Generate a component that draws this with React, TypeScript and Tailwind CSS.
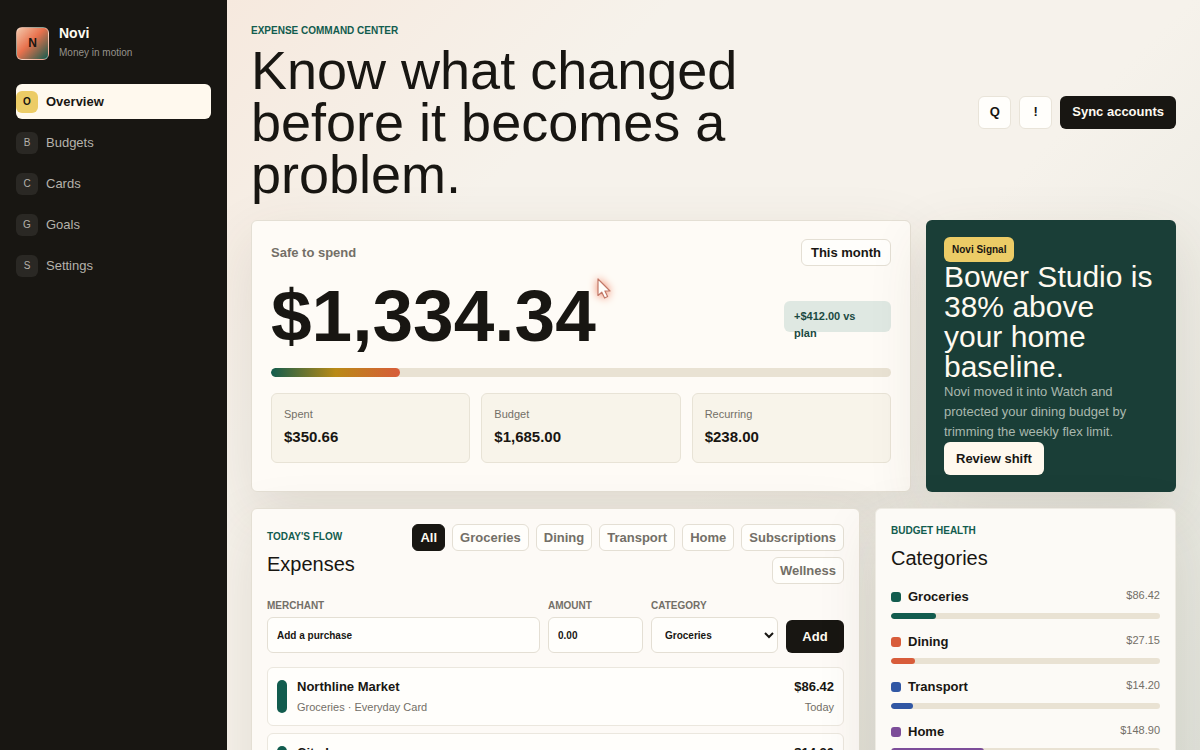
import { useState } from 'react';

type NavItemType = {
  letter: string;
  label: string;
}

type ExpenseType = {
  merchant: string;
  detail: string;
  amount: string;
  day: string;
  color: string;
}

type CategoryType = {
  name: string;
  amount: string;
  percent: number;
  color: string;
}

const navItems: NavItemType[] = [
  { letter: 'O', label: 'Overview' },
  { letter: 'B', label: 'Budgets' },
  { letter: 'C', label: 'Cards' },
  { letter: 'G', label: 'Goals' },
  { letter: 'S', label: 'Settings' },
];

const stats = [
  { label: 'Spent', value: '$350.66' },
  { label: 'Budget', value: '$1,685.00' },
  { label: 'Recurring', value: '$238.00' },
];

const filters = ['All', 'Groceries', 'Dining', 'Transport', 'Home', 'Subscriptions', 'Wellness'];

const expenses: ExpenseType[] = [
  { merchant: 'Northline Market', detail: 'Groceries · Everyday Card', amount: '$86.42', day: 'Today', color: 'bg-[#125c4e]' },
  { merchant: 'City Loop', detail: 'Transport · Everyday Card', amount: '$14.20', day: 'Today', color: 'bg-[#125c4e]' },
];

const categories: CategoryType[] = [
  { name: 'Groceries', amount: '$86.42', percent: 16.6, color: 'bg-[#125c4e]' },
  { name: 'Dining', amount: '$27.15', percent: 9, color: 'bg-[#d85c3a]' },
  { name: 'Transport', amount: '$14.20', percent: 8, color: 'bg-[#3157a4]' },
  { name: 'Home', amount: '$148.90', percent: 34.7, color: 'bg-[#7c4d99]' },
];

const Sidebar = () => {
  const [active, setActive] = useState('Overview');

  return (
    <aside className="flex w-[227px] shrink-0 flex-col gap-[23px] bg-[#181612] px-4 py-[25px]">
      <div className="flex items-center gap-[10px]">
        <div className="flex size-[33px] items-center justify-center rounded-md border border-white/40 bg-[linear-gradient(135deg,#f3c8ab_0%,#e8714d_45%,#125c4e_100%)] text-xs font-bold text-[#181612]">
          N
        </div>
        <div className="flex flex-col gap-1">
          <strong className="text-sm leading-4 text-[#fffaf0]">Novi</strong>
          <span className="text-[10px] leading-4 text-[#96938c]">Money in motion</span>
        </div>
      </div>
      <nav className="flex flex-col gap-[6px]">
        {navItems.map(({ letter, label }) => (
          <button
            key={label}
            type="button"
            onClick={() => setActive(label)}
            className={`flex h-[35px] items-center gap-2 rounded-md text-left text-[13px] ${active === label ? 'bg-[#fff9ee] font-bold text-[#181612]' : 'text-[#b5b2ab]'}`}
          >
            <span
              className={`flex size-[22px] items-center justify-center rounded-md text-[10px] ${active === label ? 'bg-[#eccc66]' : 'bg-[#2a2824]'}`}
            >
              {letter}
            </span>
            {label}
          </button>
        ))}
      </nav>
    </aside>
  )
}

const Eyebrow = ({ text }: { text: string }) => (
  <p className="text-[10px] leading-[14px] font-bold text-[#125c4e] uppercase">{text}</p>
)

const Header = () => (
  <header className="flex items-center justify-between gap-6 pb-1">
    <div className="flex max-w-[560px] flex-col gap-[6px]">
      <Eyebrow text="Expense command center" />
      <h1 className="text-[54px] leading-[52px]">Know what changed before it becomes a problem.</h1>
    </div>
    <div className="flex shrink-0 gap-2 text-[13px] font-bold">
      <button type="button" aria-label="Search" className="size-[33px] rounded-md border border-[#e9e4d9] bg-[#fffefb]">Q</button>
      <button type="button" aria-label="Alerts" className="size-[33px] rounded-md border border-[#e9e4d9] bg-[#fffefb]">!</button>
      <button type="button" className="h-[33px] rounded-md bg-[#181612] px-3 text-[#fffaf0]">Sync accounts</button>
    </div>
  </header>
)

const Pointer = () => (
  <svg
    viewBox="0 0 16 22"
    className="pointer-events-none absolute top-0 left-full h-[22px] w-4 drop-shadow-[0_0_4px_#f08060]"
    aria-hidden="true"
  >
    <path d="M2 2v16.500l3.800-3.300 2.800 5.800 3-1.500-2.700-5.500H14z" fill="#fffefb" stroke="#c07868" strokeWidth="1.200" strokeLinejoin="round" />
  </svg>
)

const BalanceCard = () => (
  <section className="rounded-md border border-[#e4dfd4] bg-[#fefbf6] px-[19px] py-[18px] shadow-[0_20px_60px_rgba(72,58,32,0.12)]">
    <div className="flex items-center justify-between">
      <h2 className="text-[13px] font-bold text-[#736f67]">Safe to spend</h2>
      <button type="button" className="h-[27px] rounded-md border border-[#e4dfd4] bg-[#fffefb] px-[9px] text-[13px] font-bold">This month</button>
    </div>
    <div className="mt-[11px] flex items-center justify-between">
      <div className="relative">
        <strong className="block text-[73px] leading-[78px]">$1,334.34</strong>
        <Pointer />
      </div>
      <div className="h-[31px] w-[107px] rounded-md bg-[#dfe8e2] px-[10px] py-[7px] text-[11px] leading-[17px] font-bold text-[#1b4a42]">
        +$412.00 vs plan
      </div>
    </div>
    <div className="mt-[13px] h-[9px] overflow-hidden rounded-full bg-[#e9e2d3]">
      <div
        className="h-full rounded-full bg-[linear-gradient(90deg,#125c4e_0%,#b98a16_50%,#d85c3a_100%)]"
        style={{ width: '20.8%' }}
      />
    </div>
    <dl className="mt-4 grid grid-cols-3 gap-[11px]">
      {stats.map(({ label, value }) => (
        <div key={label} className="h-[70px] rounded-md border border-[#e8e3d6] bg-[#f8f4ea] px-3 py-3">
          <dt className="text-[11px] leading-4 text-[#736f67]">{label}</dt>
          <dd className="mt-[5px] text-[15px] leading-5 font-bold">{value}</dd>
        </div>
      ))}
    </dl>
  </section>
)

const SignalCard = () => (
  <section className="flex flex-col items-start rounded-md bg-[#1a3e37] px-[18px] py-[17px] text-[#fffaf0] shadow-[0_20px_60px_rgba(72,58,32,0.12)]">
    <span className="rounded-md bg-[#eccc66] px-2 text-[10px] leading-[25px] font-bold text-[#181612]">Novi Signal</span>
    <h2 className="text-[30px] leading-[30px]">Bower Studio is 38% above your home baseline.</h2>
    <p className="text-[13px] leading-5 text-[#a9b8ae]">
      Novi moved it into Watch and protected your dining budget by trimming the weekly flex limit.
    </p>
    <button type="button" className="h-[33px] rounded-md bg-[#fff9ee] px-3 text-[13px] font-bold text-[#181612]">Review shift</button>
  </section>
)

const ExpenseForm = () => {
  const labelStyle = 'flex flex-col gap-[5px] text-[10px] leading-3 font-bold text-[#736f67] uppercase';
  const fieldStyle = 'h-[36px] w-full rounded-md border border-[#e4dfd4] bg-[#fffefb] text-[10px] font-bold text-[#181612]';

  return (
    <form className="mt-4 grid grid-cols-[minmax(0,1fr)_95px_127px_58px] items-end gap-2" onSubmit={(e) => e.preventDefault()}>
      <label className={labelStyle}>
        Merchant
        <input type="text" defaultValue="Add a purchase" className={`${fieldStyle} px-[9px]`} />
      </label>
      <label className={labelStyle}>
        Amount
        <input type="text" inputMode="decimal" defaultValue="0.00" className={`${fieldStyle} px-[9px]`} />
      </label>
      <label className={labelStyle}>
        Category
        <select defaultValue="Groceries" className={`${fieldStyle} pl-[9px]`}>
          {filters.slice(1).map((name) => (
            <option key={name}>{name}</option>
          ))}
        </select>
      </label>
      <button type="submit" className="h-[33px] rounded-md bg-[#181612] text-[13px] font-bold text-[#fffaf0]">Add</button>
    </form>
  )
}

const ExpensesPanel = () => {
  const [filter, setFilter] = useState('All');

  return (
    <section className="rounded-md border border-[#e4dfd4] bg-[#fdfaf6] p-[15px] shadow-[0_20px_60px_rgba(72,58,32,0.12)]">
      <div className="flex items-center justify-between gap-4">
        <div className="flex shrink-0 flex-col gap-[6px]">
          <Eyebrow text="Today's flow" />
          <h2 className="text-xl leading-7">Expenses</h2>
        </div>
        <div className="flex flex-wrap justify-end gap-x-[7px] gap-y-[6px]">
          {filters.map((name) => (
            <button
              key={name}
              type="button"
              onClick={() => setFilter(name)}
              className={`h-[27px] rounded-md border px-[7px] text-[13px] font-bold ${filter === name ? 'border-[#181612] bg-[#181612] text-[#fffaf0]' : 'border-[#e4dfd4] bg-[#fffefb] text-[#736f67]'}`}
            >
              {name}
            </button>
          ))}
        </div>
      </div>
      <ExpenseForm />
      <ul className="mt-[14px] flex flex-col gap-[7px]">
        {expenses.map(({ merchant, detail, amount, day, color }) => (
          <li key={merchant} className="flex h-[59px] items-center gap-[10px] rounded-md border border-[#ebe7de] bg-[#fffefb] px-[9px]">
            <span className={`h-[33px] w-[10px] rounded-full ${color}`} />
            <div className="flex-1">
              <strong className="block text-[13px] leading-5">{merchant}</strong>
              <span className="block text-[11px] leading-5 text-[#736f67]">{detail}</span>
            </div>
            <div className="text-right">
              <strong className="block text-[13px] leading-5">{amount}</strong>
              <span className="block text-[11px] leading-5 text-[#736f67]">{day}</span>
            </div>
          </li>
        ))}
      </ul>
    </section>
  )
}

const CategoriesPanel = () => (
  <section className="rounded-md border border-[#eeebe3] bg-[#fcfaf6] p-[15px] shadow-[0_20px_60px_rgba(72,58,32,0.12)]">
    <Eyebrow text="Budget health" />
    <h2 className="mt-[6px] text-xl leading-7">Categories</h2>
    <ul className="mt-4 flex flex-col gap-[14px]">
      {categories.map(({ name, amount, percent, color }) => (
        <li key={name} className="flex flex-col gap-2">
          <div className="flex items-start justify-between">
            <span className="flex items-center gap-[7px] text-[13px] leading-[17px] font-bold">
              <i className={`size-[10px] rounded-[3px] ${color}`} />
              {name}
            </span>
            <span className="text-[11px] leading-[14px] text-[#736f67]">{amount}</span>
          </div>
          <div className="h-[6px] overflow-hidden rounded-full bg-[#e9e2d3]">
            <div className={`h-full rounded-full ${color}`} style={{ width: `${percent}%` }} />
          </div>
        </li>
      ))}
    </ul>
  </section>
)

const App = () => {
  return (
    <div className="flex h-screen overflow-hidden bg-[#f6f2eb] font-['Liberation_Sans',Arial,sans-serif] text-[#181612]">
      <Sidebar />
      <main className="flex min-w-0 flex-1 flex-col gap-4 overflow-y-auto bg-[linear-gradient(135deg,#f6e9de_0%,#f6f2eb_26%,#f6f2eb_56%,#e0e2da_100%)] p-6 [scrollbar-width:none]">
        <Header />
        <div className="grid shrink-0 grid-cols-[minmax(0,1fr)_250px] gap-[15px]">
          <BalanceCard />
          <SignalCard />
        </div>
        <div className="grid shrink-0 grid-cols-[minmax(0,1fr)_301px] gap-[15px]">
          <ExpensesPanel />
          <CategoriesPanel />
        </div>
      </main>
    </div>
  )
}

export default App;
